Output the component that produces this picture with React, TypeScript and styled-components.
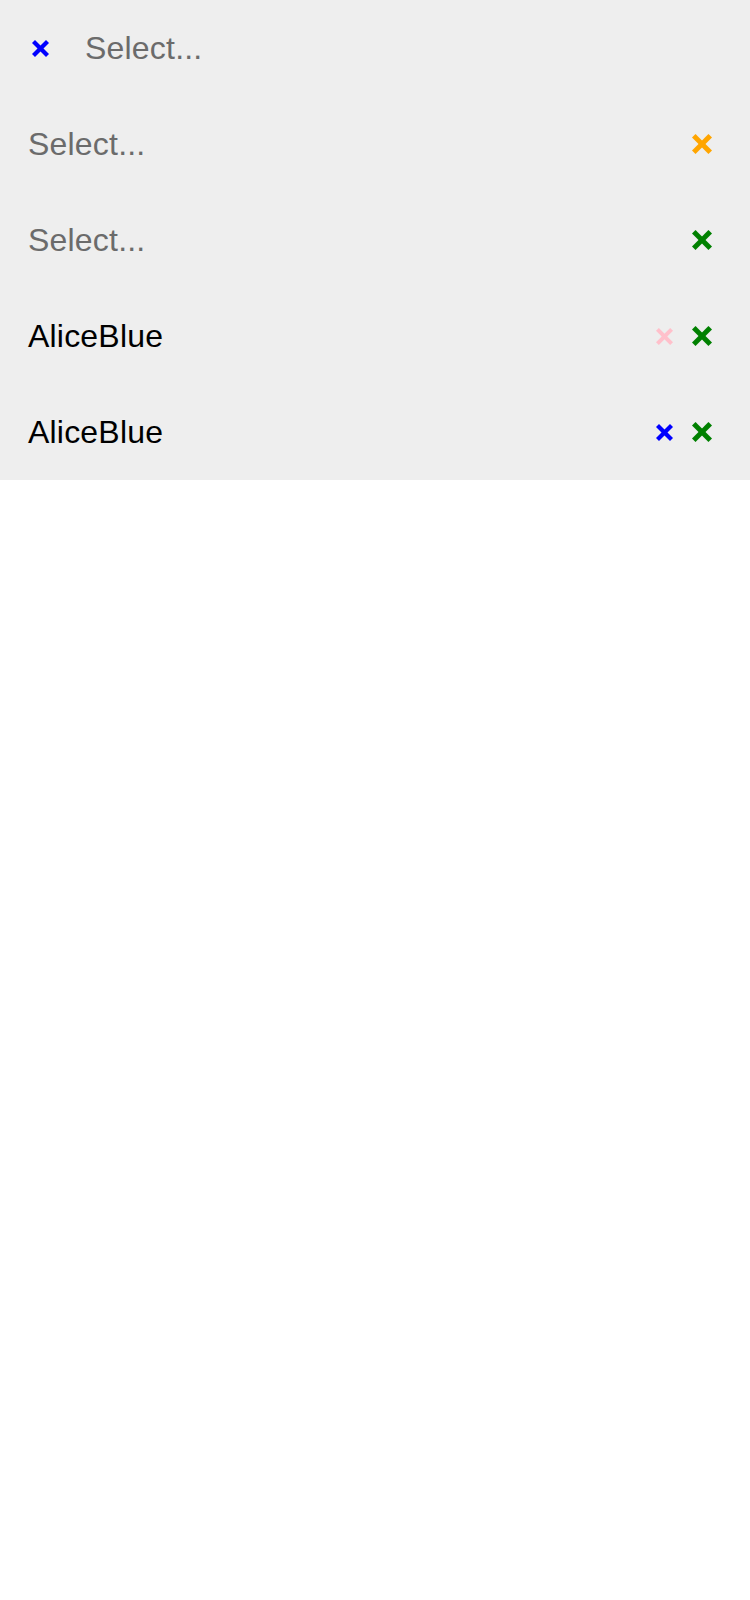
import React from "react";
import styled, { createGlobalStyle } from "styled-components";

const Global = createGlobalStyle`
  html, body { margin: 0; padding: 0; background: #ffffff; }
  body { font-family: "Liberation Sans", Arial, sans-serif; }
`;

const Panel = styled.div`
  display: flex;
  flex-direction: column;
  background: #eeeeee;
  width: 750px;
`;

const Row = styled.div<{ $lead?: boolean }>`
  display: flex;
  align-items: center;
  height: 96px;
  padding: 0 38px 0 ${(p) => (p.$lead ? 32 : 28)}px;
  box-sizing: border-box;
`;

const Label = styled.span<{ $placeholder?: boolean }>`
  flex: 1;
  font-size: 32px;
  line-height: 1;
  letter-spacing: 0.2px;
  color: ${(p) => (p.$placeholder ? "#6b6b6b" : "#000000")};
`;

const LeadLabel = styled(Label)`
  margin-left: 36px;
`;

const Icons = styled.div`
  display: flex;
  align-items: center;
  gap: 19px;
`;

const IconBox = styled.span<{ $size: number }>`
  display: inline-flex;
  width: ${(p) => p.$size}px;
  height: ${(p) => p.$size}px;
`;

function Cross({ color, size, weight }: { color: string; size: number; weight: number }) {
  const o = weight / (2 * Math.SQRT2);
  return (
    <IconBox $size={size}>
      <svg width={size} height={size} viewBox={`0 0 ${size} ${size}`}>
        <line x1={o} y1={o} x2={size - o} y2={size - o} stroke={color} strokeWidth={weight} />
        <line x1={size - o} y1={o} x2={o} y2={size - o} stroke={color} strokeWidth={weight} />
      </svg>
    </IconBox>
  );
}

export default function App() {
  return (
    <>
      <Global />
      <Panel>
        <Row $lead>
          <Cross color="#0000ff" size={17} weight={4.2} />
          <LeadLabel $placeholder>Select...</LeadLabel>
        </Row>
        <Row>
          <Label $placeholder>Select...</Label>
          <Icons>
            <Cross color="#ffa500" size={20} weight={5} />
          </Icons>
        </Row>
        <Row>
          <Label $placeholder>Select...</Label>
          <Icons>
            <Cross color="#008000" size={20} weight={5} />
          </Icons>
        </Row>
        <Row>
          <Label>AliceBlue</Label>
          <Icons>
            <Cross color="#ffc0cb" size={17} weight={4} />
            <Cross color="#008000" size={20} weight={5} />
          </Icons>
        </Row>
        <Row>
          <Label>AliceBlue</Label>
          <Icons>
            <Cross color="#0000ff" size={17} weight={4.2} />
            <Cross color="#008000" size={20} weight={5} />
          </Icons>
        </Row>
      </Panel>
    </>
  );
}
